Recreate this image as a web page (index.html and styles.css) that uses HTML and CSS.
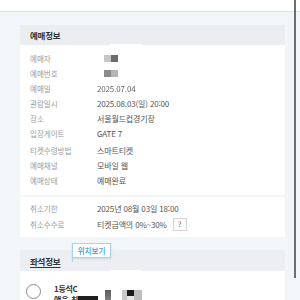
FILE: index.html
```html
<!DOCTYPE html>
<html lang="ko">
<head>
<meta charset="utf-8">
<link rel="stylesheet" href="styles.css">
</head>
<body>
<div class="topbar"></div>
<div class="page">
  <section class="card">
    <div class="card-head"><span class="title">예매정보</span><span class="tab-line"></span></div>
    <div class="card-body">
      <div class="row"><span class="label">예매자</span><span class="value"><span class="mask"><i class="m1"></i><i class="m2"></i></span></span></div>
      <div class="row"><span class="label">예매번호</span><span class="value"><span class="mask"><i class="m3"></i><i class="m4"></i></span></span></div>
      <div class="row"><span class="label">예매일</span><span class="value blur">2025.07.04</span></div>
      <div class="row"><span class="label">관람일시</span><span class="value">2025.08.03(일) 20:00</span></div>
      <div class="row"><span class="label">장소</span><span class="value">서울월드컵경기장</span></div>
      <div class="row"><span class="label">입장게이트</span><span class="value">GATE 7</span></div>
      <div class="row tall"><span class="label">티켓수령방법</span><span class="value">스마트티켓</span></div>
      <div class="row"><span class="label">예매채널</span><span class="value">모바일 웹</span></div>
      <div class="row"><span class="label">예매상태</span><span class="value">예매완료</span></div>
    </div>
    <div class="card-body second">
      <div class="row"><span class="label">취소기한</span><span class="value">2025년 08월 03일 18:00</span></div>
      <div class="row fee"><span class="label">취소수수료</span><span class="value">티켓금액의 0%~30%</span><span class="qbox">?</span></div>
    </div>
  </section>

  <section class="card seat">
    <div class="card-head seat-head"><span class="title under">좌석정보</span><span class="tab-line"></span></div>
    <div class="tooltip">위치보기</div>
    <div class="seat-body">
      <span class="radio"></span>
      <div class="seat-text">
        <div class="seat-name">1등석C</div>
        <div class="seat-line"><span>얘은 최</span><i class="blk b1"></i><i class="blk b2"></i><i class="blk b3"></i></div>
      </div>
    </div>
  </section>
</div>
<div class="scrollbar"></div>
</body>
</html>
```

FILE: styles.css
```css
html, body {
  margin: 0;
  padding: 0;
}
body {
  width: 300px;
  height: 300px;
  overflow: hidden;
  position: relative;
  background: #f3f6f8;
  font-family: "Noto Sans CJK KR", "Noto Sans", sans-serif;
  color: #555;
}
.topbar {
  height: 11px;
  background: #fff;
  border-bottom: 1px solid #e1e4e7;
}
.page {
  padding: 13px 15px 0 20px;
  display: flex;
  flex-direction: column;
  gap: 13px;
}
.card {
  position: relative;
  display: flex;
  flex-direction: column;
}
.card-head {
  position: relative;
  height: 20px;
  background: #ebedf0;
  display: flex;
  align-items: center;
  padding-left: 10px;
}
.tab-line {
  position: absolute;
  left: 90px;
  bottom: 0;
  width: 32px;
  height: 1px;
  background: #fff;
}
.title {
  font-size: 8.5px;
  font-weight: 700;
  color: #333;
  letter-spacing: -0.2px;
}
.card-body {
  background: #fff;
  padding: 6px 0 7px 10px;
  display: flex;
  flex-direction: column;
}
.card-body.second {
  margin-top: 2px;
  padding: 4px 0 5px 10px;
}
.row {
  height: 15px;
  display: flex;
  align-items: center;
}
.row.tall {
  height: 17px;
  padding-top: 2px;
  box-sizing: border-box;
}
.row.fee {
  height: 16px;
}
.label {
  width: 67px;
  font-size: 7.5px;
  color: #9c9c9c;
}
.value {
  font-size: 8px;
  color: #555;
  letter-spacing: -0.15px;
}
.value.blur {
  filter: blur(0.5px);
  color: #666;
}
.mask {
  display: flex;
  margin-left: 7px;
}
.mask i {
  display: block;
  width: 7px;
  height: 7px;
}
.m1 { background: #c6c6c8; }
.m2 { background: #6c6c70; }
.m3 { background: #8a8a8e; }
.m4 { background: #b4b4b8; }
.qbox {
  margin-left: 6px;
  width: 14px;
  height: 13px;
  box-sizing: border-box;
  border: 1px solid #d4d4d4;
  font-size: 7px;
  color: #555;
  display: flex;
  align-items: center;
  justify-content: center;
}
.seat-head {
  height: 21px;
  background: #eceef2;
  align-items: flex-end;
  padding-bottom: 4px;
  box-sizing: border-box;
}
.under {
  text-decoration: underline;
  text-underline-offset: 1.5px;
}
.tooltip {
  position: absolute;
  left: 52px;
  top: -7px;
  width: 39px;
  height: 15px;
  box-sizing: border-box;
  background: #fff;
  border: 1px solid #a8d4ec;
  box-shadow: 0 1px 2px rgba(120, 170, 200, 0.35);
  color: #3a97d4;
  font-size: 7.5px;
  font-weight: 500;
  display: flex;
  align-items: center;
  justify-content: center;
}
.tooltip::after {
  content: "";
  position: absolute;
  left: -1px;
  top: 13px;
  width: 1px;
  height: 5px;
  background: #a8d4ec;
}
.seat-body {
  background: #fff;
  height: 40px;
  display: flex;
  padding: 12px 0 0 6px;
  gap: 13px;
}
.radio {
  width: 15px;
  height: 15px;
  box-sizing: border-box;
  border: 1px solid #8a8a8a;
  border-radius: 50%;
  background: #fff;
  flex: none;
  margin-top: 1px;
}
.seat-text {
  display: flex;
  flex-direction: column;
}
.seat-name {
  font-size: 8px;
  font-weight: 700;
  color: #333;
  margin-top: 0;
  letter-spacing: -0.3px;
}
.seat-line {
  display: flex;
  align-items: flex-start;
  font-size: 8px;
  font-weight: 700;
  color: #333;
  margin-top: -5px;
  height: 20px;
}
.seat-line span {
  padding-top: 5px;
  width: 24px;
  overflow: hidden;
  white-space: nowrap;
}
.blk {
  display: block;
}
.b1 {
  width: 20px;
  height: 8px;
  margin-top: 7px;
  background: #1e1e1e;
}
.b2 {
  width: 6px;
  height: 14px;
  margin-left: 7px;
  margin-top: 1px;
  background: linear-gradient(#5c5c5c, #8c8c8c);
}
.b3 {
  width: 20px;
  height: 14px;
  margin-left: 11px;
  margin-top: 1px;
  background:
    linear-gradient(#1a1a1a, #1a1a1a) 5px 0 / 7px 6px no-repeat,
    linear-gradient(90deg, #c8c8c8 0 5px, #e6e6e6 5px 12px, #bdbdbd 12px);
}
.scrollbar {
  position: absolute;
  left: 294px;
  top: 0;
  width: 2px;
  height: 278px;
  background: #6e6e6e;
}
```
